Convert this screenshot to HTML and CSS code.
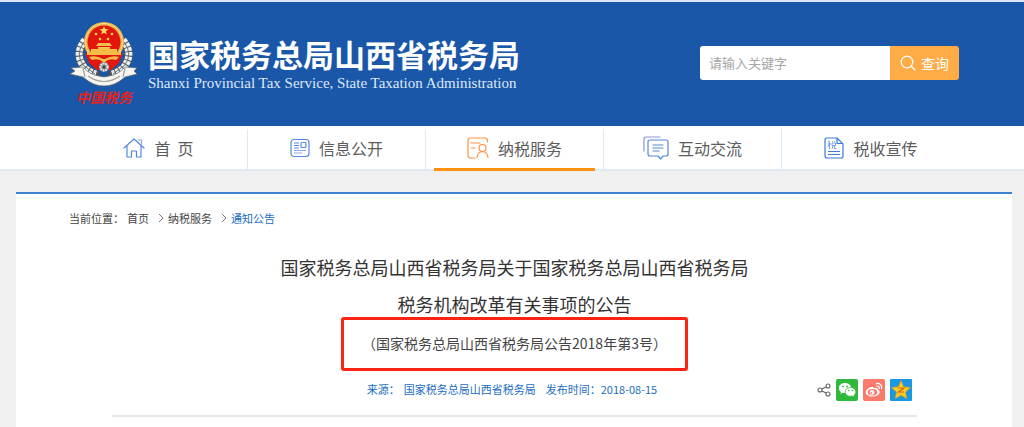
FILE: index.html
```html
<!DOCTYPE html>
<html lang="zh-CN">
<head>
<meta charset="utf-8">
<title>国家税务总局山西省税务局</title>
<link rel="stylesheet" href="styles.css">
</head>
<body>
<header class="header">
  <div class="brand">
    <svg class="emblem" viewBox="0 0 72 88" role="img" aria-label="中国税务">
      <g fill="none" stroke="#4b5157" stroke-width="8" stroke-linecap="round">
        <path d="M18 21Q7 32 14 44Q18 51 28 54"/><path d="M54 21Q65 32 58 44Q54 51 44 54"/>
      </g>
      <g fill="none" stroke="#eef0ef" stroke-width="7" stroke-dasharray="3.5 1">
        <path d="M17 20Q7 32 14 44Q18 51 28 54"/><path d="M55 20Q65 32 58 44Q54 51 44 54"/>
      </g>
      <g fill="none" stroke="#6b7175" stroke-width="1">
        <path d="M16 22Q7 33 15 45L27 54M56 22Q65 33 57 45L45 54"/>
      </g>
      <circle cx="36" cy="22" r="20" fill="#e9b44c"/>
      <circle cx="36" cy="22" r="18.5" fill="none" stroke="#f7d98a"/>
      <circle cx="36" cy="22" r="16.5" fill="#e3160f"/>
      <path d="M17 33H55L51 43L43 50H29L21 43Z" fill="#e3160f"/>
      <path d="M36 6l1.2 3.1 3.3.2-2.6 2 .9 3.2-2.8-1.8-2.8 1.8.9-3.2-2.6-2 3.3-.2z" fill="#ffd75a"/>
      <g fill="#ffd75a"><circle cx="28" cy="14" r="1.3"/><circle cx="44" cy="14" r="1.3"/><circle cx="32" cy="19" r="1.3"/><circle cx="40" cy="19" r="1.3"/></g>
      <path d="M28 26L30 23H42L44 26ZM30 27H42V29H30ZM23 29H49V32H53V35H19V32H23Z" fill="#f4bd48"/>
      <path d="M21 37Q28 35 35 39H37Q44 35 51 37L48 40Q41 38 37 42H35Q31 38 24 40Z" fill="#f4bd48"/>
      <circle cx="36" cy="47" r="5" fill="#8a9297"/><circle cx="36" cy="47" r="3.5" fill="none" stroke="#eef0ef" stroke-width="2" stroke-dasharray="1.5 1"/><circle cx="36" cy="47" r="1.5" fill="#32414f"/>
      <path d="M3 48L15 47Q22 55 31 56Q36 58 41 56Q50 55 57 47L69 48L66 51L69 54L57 57Q47 66 36 66Q25 66 15 57L2 54L7 51Z" fill="#f6f5ef" stroke="#666c70" stroke-width=".7"/>
      <path d="M15 48L17 57M57 48L55 57M20 56Q36 67 52 56" fill="none" stroke="#9ca1a2" stroke-width="1.2"/>
      <text x="8" y="83" class="emblem-text">中国税务</text>
    </svg>
    <div>
      <div class="brand-name">国家税务总局山西省税务局</div>
      <div class="brand-en" lang="en">Shanxi Provincial Tax Service, State Taxation Administration</div>
    </div>
  </div>
  <form class="search">
    <input class="search-input" type="text" placeholder="请输入关键字" aria-label="请输入关键字">
    <button class="search-button" type="button">
      <svg width="16" height="16" viewBox="0 0 16 16" fill="none" stroke="#fff" stroke-width="1.3" stroke-linecap="round"><circle cx="7" cy="7" r="5.8"/><path d="M11.3 11.3L15 15"/></svg>查询</button>
  </form>
</header>

<nav class="nav">
  <a class="nav-item" href="#"><svg width="22" height="22" viewBox="0 0 22 22" fill="none" stroke="#5588dc" stroke-width="1.2" stroke-linejoin="round" stroke-linecap="round"><path d="M1 11L11 2L21 11M4 9V20H8.5V14H13.5V20H18V9"/><path d="M15 3H18.500V8.500" stroke="#8ea8ea"/></svg>首&nbsp; 页</a>
  <a class="nav-item" href="#"><svg width="20" height="20" viewBox="0 0 20 20" fill="none" stroke="#5588dc" stroke-width="1.2"><rect x="1" y="1.500" width="18" height="17" rx="3"/><rect x="11" y="4.500" width="5" height="5" rx="1"/><path d="M4 5H9M4 7.500H9M4 10H9" /><path d="M4 12.500H16M4 15H12" stroke="#8ea8ea"/></svg>信息公开</a>
  <a class="nav-item nav-item-active" href="#"><svg width="22" height="22" viewBox="0 0 22 22" fill="none" stroke="#ff9147" stroke-width="1.2" stroke-linecap="round"><path d="M20.500 5V3.500Q20.500 1 18 1H3.500Q1 1 1 3.500V18.500Q1 21 3.500 21H8M4 6H13M4 11H8"/><circle cx="15.500" cy="11" r="3.500"/><path d="M10 20.500Q10.500 15 15.500 14.500Q20.500 15 21 20.500"/></svg>纳税服务</a>
  <a class="nav-item" href="#"><svg width="26" height="24" viewBox="0 0 26 24" fill="none" stroke="#5588dc" stroke-width="1.2" stroke-linejoin="round" stroke-linecap="round"><path d="M1 15V3Q1 1 3 1H17" stroke="#8b91df"/><path d="M7 4H23Q25 4 25 6V18Q25 20 23 20H20L17.500 23L15 20H7Q5 20 5 18V6Q5 4 7 4ZM10 9H20M10 12H20M10 15H16"/></svg>互动交流</a>
  <a class="nav-item" href="#"><svg width="20" height="22" viewBox="0 0 20 22" fill="none" stroke="#3f7bdd" stroke-width="1.2" stroke-linejoin="round"><path d="M3 1H13L19 7V19Q19 21 17 21H3Q1 21 1 19V3Q1 1 3 1ZM13 1V6.500H19M4 14.500H16M4 17.500H16"/><path d="M6 4L4 5M3.500 7H7M5.500 5V12M5 8L3.500 10M8 4L9 5M11 4L10 5M8 6H11.500V8.500H8ZM9 9L8 12M10.500 9V11.500H12.500" stroke-width=".7"/></svg>税收宣传</a>
</nav>

<main class="card">
  <div class="crumbs">
    <span>当前位置：</span>
    <a class="crumb-home" href="#">首页</a>
    <svg class="chevron" viewBox="0 0 6 10"><path d="M1 1L5 5L1 9"/></svg>
    <a href="#">纳税服务</a>
    <svg class="chevron" viewBox="0 0 6 10"><path d="M1 1L5 5L1 9"/></svg>
    <a class="crumb-current" href="#">通知公告</a>
  </div>
  <article class="article">
    <h1 class="title">国家税务总局山西省税务局关于国家税务总局山西省税务局<br>税务机构改革有关事项的公告</h1>
    <p class="doc-number">（国家税务总局山西省税务局公告2018年第3号）</p>
    <div class="meta">
      <div class="meta-text"><span>来源：</span><span>国家税务总局山西省税务局</span><span class="meta-date">发布时间：2018-08-15</span></div>
      <div class="share">
        <button class="share-button share-more" type="button" aria-label="分享"><svg viewBox="0 0 14 14" fill="none" stroke="#666" stroke-width="1.1"><circle cx="3" cy="7" r="2"/><circle cx="11" cy="3" r="2"/><circle cx="11" cy="11" r="2"/><path d="M4.800 6.100L9.200 3.900M4.800 7.900L9.200 10.100"/></svg></button>
        <button class="share-button" type="button" aria-label="微信"><svg viewBox="0 0 22 22"><rect width="22" height="22" rx="2" fill="#2fb83a"/><path d="M9 4C5.500 4 2.800 6.200 2.800 9c0 1.600.8 3 2.200 3.900L4.500 15l2.300-1.200c.7.200 1.400.3 2.200.3 3.500 0 6.200-2.300 6.200-5.100S12.500 4 9 4z" fill="#fff"/><path d="M14.500 8.500c-3 0-5.300 1.900-5.300 4.400s2.300 4.400 5.300 4.400c.7 0 1.300-.1 1.900-.3l2 1-.4-1.900c1.100-.8 1.800-1.900 1.800-3.200 0-2.500-2.300-4.400-5.300-4.400z" fill="#fff" stroke="#2fb83a" stroke-width=".7"/><g fill="#2fb83a"><circle cx="7" cy="7.500" r=".9"/><circle cx="11" cy="7.500" r=".9"/><circle cx="12.700" cy="11.500" r=".8"/><circle cx="16.300" cy="11.500" r=".8"/></g></svg></button>
        <button class="share-button" type="button" aria-label="微博"><svg viewBox="0 0 22 22"><rect width="22" height="22" rx="2" fill="#fa7a6c"/><path d="M9 8C6.500 8 2.800 10.500 2.800 13.500c0 2.400 3 4 6.500 4 4.500 0 7.400-2.200 7.400-4.600 0-1.400-1-2-2.200-2.400.5-1.700-1-2.400-3.800-1.300C10.900 8.300 10 8 9 8z" fill="#fff"/><ellipse cx="9.500" cy="13.200" rx="4.800" ry="3.200" fill="#fa7a6c"/><circle cx="9" cy="13.400" r="2.400" fill="#fff"/><circle cx="8.500" cy="13.900" r=".9" fill="#fa7a6c"/><path d="M13.500 4.600c3.200-.7 5.800 1.700 5.100 5M14 7.200c1.600-.3 2.600.7 2.300 2.200" fill="none" stroke="#fff" stroke-width="1.300" stroke-linecap="round"/></svg></button>
        <button class="share-button" type="button" aria-label="QQ空间"><svg viewBox="0 0 22 22"><rect width="22" height="22" rx="1" fill="#1a98e6"/><path d="M11 1.500L13.700 7.800L20.500 8.500L15.500 13.100L17 19.800L11 16.300L5 19.800L6.500 13.100L1.500 8.500L8.300 7.800Z" fill="#ffc928" stroke="#c69a1b" stroke-width=".7" stroke-linejoin="round"/><path d="M8 9H14L8.500 13H14" fill="none" stroke="#c86f10" stroke-width="1.200"/></svg></button>
      </div>
    </div>
  </article>
</main>
</body>
</html>
```
FILE: styles.css
```css
* { box-sizing: border-box; }
body {
  margin: 0;
  background: #f0f0f0;
  color: #444;
  font-family: "Noto Sans CJK SC", sans-serif;
}
a { color: inherit; text-decoration: none; }
button { border: 0; padding: 0; background: none; font-family: inherit; cursor: pointer; }

.header {
  display: flex;
  justify-content: space-between;
  align-items: flex-start;
  padding: 18px 65px 18px 68px;
  border-top: 2px solid #dfe7f2;
  background: #1a57a9;
}
.brand { display: flex; gap: 8px; color: #fff; }
.emblem { width: 72px; height: 88px; }
.emblem-text { font-size: 14px; font-weight: 700; font-style: italic; fill: #e3221c; }
.brand-name { margin-top: 14px; font-size: 31px; font-weight: 700; line-height: 40px; white-space: nowrap; }
.brand-en { font-family: "Liberation Serif", serif; font-size: 15px; line-height: 18px; white-space: nowrap; color: #dde8f7; }

.search { display: flex; height: 34px; margin-top: 26px; border-radius: 3px; overflow: hidden; }
.search-input { width: 190px; border: 0; padding: 0 9px 2px; background: #fff; font-family: inherit; font-size: 13px; outline: 0; }
.search-input::placeholder { color: #a5a5a5; opacity: 1; }
.search-button { display: flex; align-items: center; justify-content: center; gap: 5px; width: 69px; background: #ffac46; color: #fff; font-size: 14px; }

.nav {
  display: grid;
  grid-template-columns: repeat(5, 1fr);
  padding: 3px 64px 0 70px;
  border-bottom: 2px solid #deebf7;
  background: #fff;
}
.nav-item {
  position: relative;
  display: flex;
  align-items: center;
  justify-content: center;
  gap: 9px;
  height: 40px;
  border-right: 1px solid #d9eaf8;
  padding-bottom: 3px;
  color: #5c5c5c;
  font-size: 16px;
  white-space: nowrap;
}
.nav-item:last-child { border-right: 0; }
.nav-item-active::after {
  content: "";
  position: absolute;
  right: 8px;
  bottom: -2px;
  left: 8px;
  height: 3px;
  background: #ff9010;
}

.card { margin: 21px 12px 0 16px; border-top: 2px solid #3a84d2; padding: 0 95px 10px 96px; background: #fff; }
.crumbs { display: flex; align-items: center; margin: 14px 0 0 -43px; font-size: 11px; line-height: 20px; white-space: nowrap; }
.crumb-home { margin-left: 3px; }
.crumb-current { color: #1b6cc0; }
.chevron { width: 6px; height: 10px; margin: 0 4px 0 9px; fill: none; stroke: #777; stroke-width: 1; }

.article { padding-top: 21px; border-bottom: 2px solid #e9e9e9; }
.title { margin: 0; color: #333; font-size: 18px; font-weight: 400; line-height: 37px; text-align: center; }
.doc-number {
  width: fit-content;
  margin: -6px auto 0;
  border: 3px solid #fa2314;
  border-radius: 3px;
  padding: 11px 18px 13px;
  font-size: 14px;
  line-height: 24px;
}
.meta { display: grid; grid-template-columns: 1fr auto 1fr; align-items: center; padding: 8px 5px 14px 0; }
.meta-text { display: flex; grid-column: 2; gap: 4px; padding-bottom: 2px; color: #1b6cc0; font-size: 11px; line-height: 16px; white-space: nowrap; }
.meta-date { margin-left: 6px; }
.share { display: flex; align-items: center; justify-content: flex-end; gap: 5px; }
.share-button { width: 22px; height: 22px; }
.share-more { width: 14px; height: 14px; }
.share-button svg { display: block; width: 100%; }
```
